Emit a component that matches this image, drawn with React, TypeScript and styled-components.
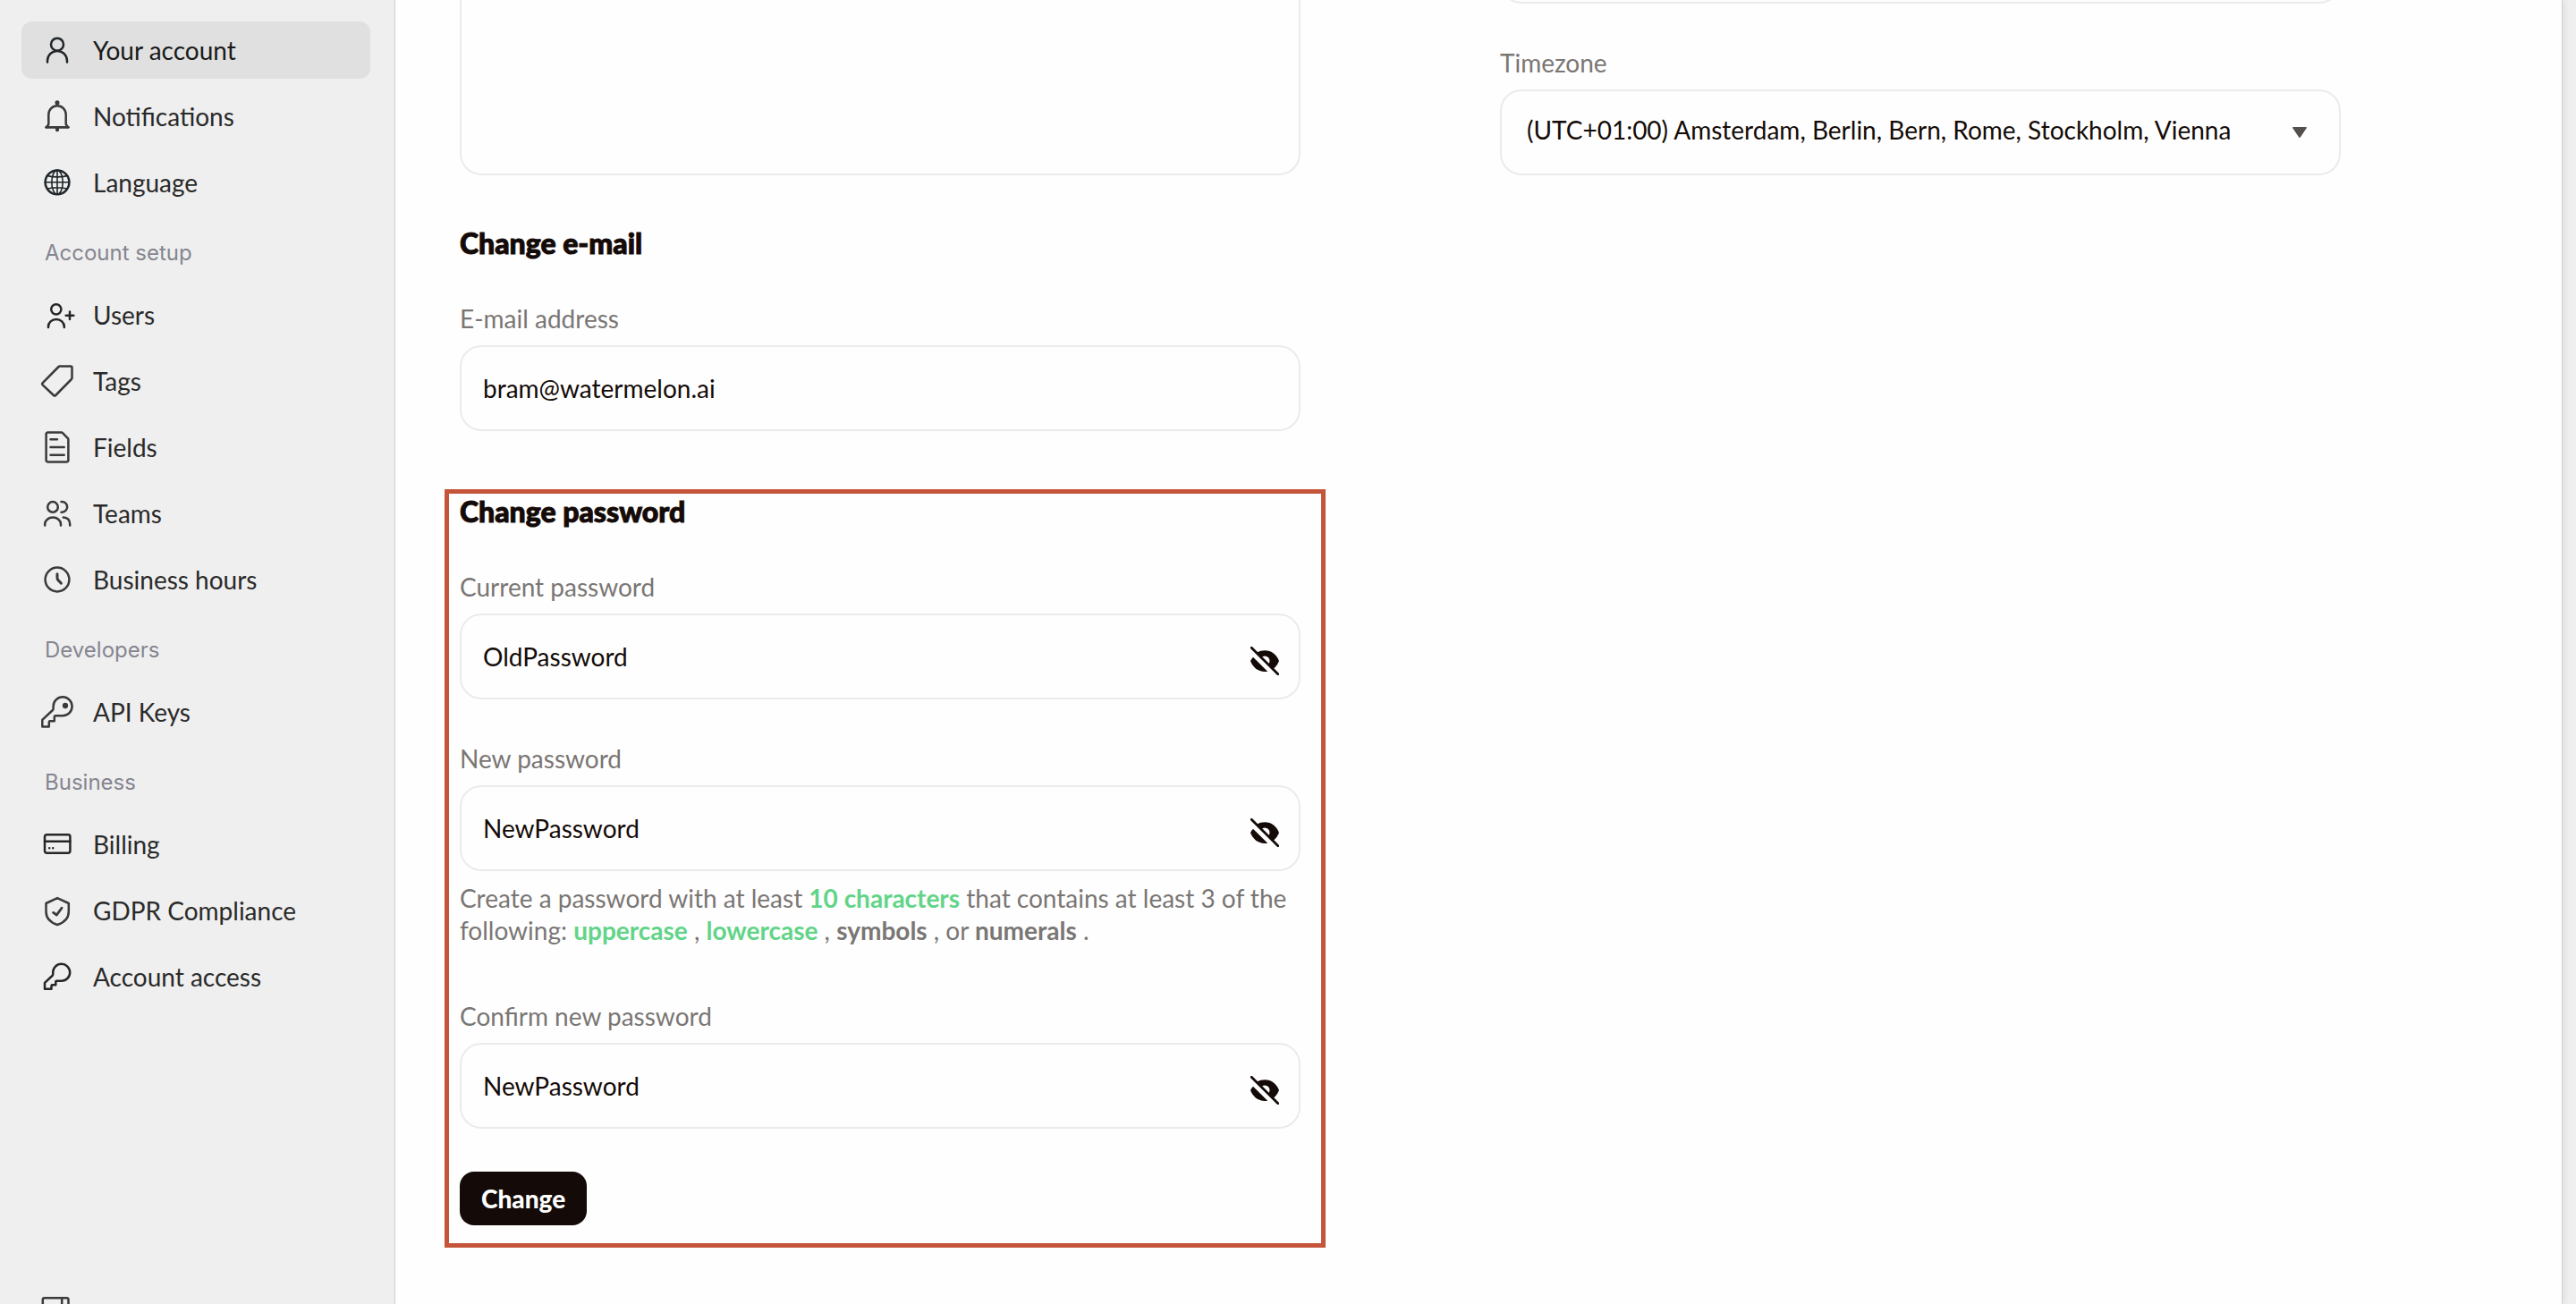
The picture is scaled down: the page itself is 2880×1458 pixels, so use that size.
import React, { useState } from "react";
import styled, { createGlobalStyle } from "styled-components";

const colors = {
  shell: "#efefef",
  surface: "#fefefe",
  active: "#e0e0e0",
  line: "#ebebeb",
  edge: "#d0d0d0",
  ink: "#140b08",
  nav: "#2a2a2a",
  icon: "#3a3a3a",
  muted: "#7a7674",
  section: "#85858f",
  success: "#62d488",
  frame: "#c4553b",
};

const GlobalStyle = createGlobalStyle`
  *, *::before, *::after { box-sizing: border-box; }
  body {
    margin: 0;
    background: ${colors.shell};
    color: ${colors.ink};
    font-family: Lato, "Liberation Sans", sans-serif;
    font-size: 28px;
    line-height: 36px;
  }
  button, input, select, textarea { font: inherit; color: inherit; }
`;

const Shell = styled.div`
  display: grid;
  grid-template-columns: 442px minmax(0, 1fr);
  height: 100vh;
  padding-right: 16px;
  overflow: hidden;
`;

const Sidebar = styled.aside`
  display: flex;
  flex-direction: column;
  min-height: 0;
  padding: 24px 27px 0 24px;
  border-right: 1px solid ${colors.edge};
`;

const NavList = styled.nav`
  display: flex;
  flex-direction: column;
  gap: 10px;
`;

const NavItem = styled.a<{ $active?: boolean }>`
  display: flex;
  align-items: center;
  gap: 24px;
  height: 64px;
  padding: 0 24px;
  border-radius: 12px;
  color: ${(p) => (p.$active ? "#1a1a1a" : colors.nav)};
  background: ${(p) => (p.$active ? colors.active : "transparent")};
  text-decoration: none;
`;

const NavSection = styled.h3`
  display: flex;
  align-items: center;
  height: 64px;
  margin: 0;
  padding: 10px 26px 0;
  color: ${colors.section};
  font-family: Inter, "Liberation Sans", sans-serif;
  font-size: 24px;
  font-weight: 400;
`;

const CollapseButton = styled.button`
  display: flex;
  align-items: center;
  flex: none;
  height: 64px;
  margin: auto 0 -40px;
  padding: 0 22px;
  border: 0;
  background: none;
`;

const NavIcon = styled.svg<{ $tone?: string }>`
  flex: none;
  width: 32px;
  height: 32px;
  overflow: visible;
  fill: none;
  stroke: ${(p) => p.$tone ?? colors.icon};
  stroke-width: 2.5;
  stroke-linecap: round;
  stroke-linejoin: round;
`;

const Panel = styled.main`
  min-height: 0;
  overflow: hidden;
  padding: 0 247px 0 72px;
  background: ${colors.surface};
  box-shadow: 1px 0 0 ${colors.edge}, 4px 0 6px rgba(0, 0, 0, 0.06);
`;

const Columns = styled.div`
  display: grid;
  grid-template-columns: repeat(2, minmax(0, 1fr));
  column-gap: 223px;
  margin-top: -92px;
`;

const Column = styled.div`
  display: flex;
  flex-direction: column;
`;

const Section = styled.section`
  display: flex;
  flex-direction: column;
  margin-top: 56px;
`;

const HighlightedSection = styled(Section)`
  margin: 65px -28px 0 -17px;
  padding: 0 23px 20px 12px;
  border: 5px solid ${colors.frame};
`;

const Heading = styled.h2`
  margin: 0 0 46px;
  font-size: 32px;
  font-weight: 900;
  line-height: 40px;
  -webkit-text-stroke: 1px currentColor;
`;

const FieldGroup = styled.div`
  display: flex;
  flex-direction: column;
  gap: 12px;

  & + & {
    margin-top: 48px;
  }
`;

const HintedGroup = styled(FieldGroup)`
  margin-bottom: 12px;
`;

const Label = styled.label`
  color: ${colors.muted};
`;

const Box = styled.div`
  position: relative;
  display: flex;
  align-items: center;
  height: 96px;
  border: 2px solid ${colors.line};
  border-radius: 24px;
`;

const Input = styled.input`
  flex: 1;
  min-width: 0;
  height: 100%;
  padding: 0 24px;
  border: 0;
  outline: 0;
  background: none;
`;

const Bio = styled.textarea`
  display: block;
  width: 100%;
  height: 288px;
  padding: 24px;
  border: 2px solid ${colors.line};
  border-radius: 24px;
  outline: 0;
  background: none;
  resize: none;
`;

const Select = styled.select`
  appearance: none;
  width: 100%;
  height: 100%;
  padding: 0 80px 6px 28px;
  border: 0;
  border-radius: 24px;
  outline: 0;
  background: none;
`;

const Caret = styled.svg`
  position: absolute;
  right: 36px;
  width: 16px;
  height: 12px;
  pointer-events: none;
`;

const ToggleButton = styled.button`
  display: flex;
  flex: none;
  margin-right: 22px;
  padding: 10px 0 0;
  border: 0;
  background: none;
`;

const Hint = styled.p`
  margin: 0;
  color: ${colors.muted};
`;

const Rule = styled.strong<{ $met?: boolean }>`
  color: ${(p) => (p.$met ? colors.success : "inherit")};
  font-weight: 700;
`;

const SubmitButton = styled.button`
  align-self: flex-start;
  height: 60px;
  margin-top: 48px;
  padding: 0 24px;
  border: 0;
  border-radius: 16px;
  background: ${colors.ink};
  color: #fff;
  font-weight: 900;
`;

const icons = {
  account: (
    <>
      <circle cx="16" cy="9.7" r="7" />
      <path d="M5 29.5V28a11 11 0 0 1 22 0v1.5" />
    </>
  ),
  bell: (
    <>
      <circle cx="16" cy="0.8" r="1.3" />
      <path d="M4 28.3 6.3 25V14.3a9.7 10 0 0 1 19.4 0V25l2.3 3.3" />
      <path d="M3.6 28.3H28.4" strokeWidth="2.8" />
      <path d="M14 29h4v2.2a2 2 0 0 1-4 0z" fill="#3a3a3a" stroke="none" />
    </>
  ),
  globe: (
    <>
      <circle cx="16" cy="15.8" r="13.4" />
      <g strokeWidth="1.6">
        <ellipse cx="16" cy="15.8" rx="6.2" ry="13.4" />
        <path d="M16 2.4v26.8M2.6 15.8h26.8M5.2 8.6q10.8 2.6 21.6 0M5.2 23q10.8-2.6 21.6 0" />
      </g>
    </>
  ),
  users: (
    <>
      <circle cx="14.8" cy="9.8" r="5.6" />
      <path d="M6 30v-1a8.9 8 0 0 1 17.8 0v1M30 12.4v8.6M25.7 16.7h8.6" />
    </>
  ),
  tag: (
    <path d="M18.9-.5H31a1.5 1.5 0 0 1 1.5 1.5v11.6q0 .8-.6 1.4L14.2 32q-1.1 1.1-2.2 0L-.3 20.3q-1.1-1.1 0-2.2L17.6 0q.5-.5 1.3-.5z" />
  ),
  document: (
    <>
      <path d="M5.4-.4h15.4q.7 0 1.2.5l5.9 6q.5.5.5 1.2v23.3q0 1.8-1.8 1.8H5.4q-1.8 0-1.8-1.8V1.4Q3.6-.4 5.4-.4z" />
      <path d="M8.5 7.3h7.4M8.5 16h15.2M8.5 24.7h15.2" />
    </>
  ),
  team: (
    <>
      <circle cx="11" cy="8.9" r="5.8" />
      <path d="M2.2 29.5V28a8.9 7.5 0 0 1 17.8 0v1.5M20.5 3h.8a5.8 5.8 0 0 1 0 11.7h-.8M22.8 20.6q7.4.6 7.4 7.6v1.3" />
    </>
  ),
  clock: (
    <>
      <circle cx="16" cy="16" r="13.4" />
      <path d="M16 9.8v4.4q0 1.4 1 2.4l3.4 3.6" strokeWidth="3" />
    </>
  ),
  key: (
    <>
      <path d="M11.6 9.8a10.5 10.5 0 1 1 10.6 10.5h-8q-1.4 0-1.4 1.4v4.6H8q-1.2 0-1.2 1.2v5H-.7v-7.6L10.9 14q.7-.7.7-1.7z" />
      <circle cx="25" cy="9" r="1.9" fill="#3a3a3a" />
    </>
  ),
  card: (
    <>
      <rect x="2" y="5.2" width="28.4" height="20.6" rx="2.2" />
      <path d="M2 12.7h28.4" />
      <path d="M7.2 20.3h.01M11.2 20.3h.01" />
    </>
  ),
  shield: (
    <>
      <path d="M16.1 2.1 28.8 8v9.2c0 7-4.9 12.2-12.7 14.8C8.4 29.4 3.5 24.2 3.5 17.2V8z" />
      <path d="M11.6 18.4 15.4 21 21 13.2" strokeWidth="2.8" />
    </>
  ),
  access: (
    <path d="M11.2 11.3a9.5 9.5 0 1 1 9.6 9.5h-5.6q-.9 0-.9.9v3.6h-3.8q-1 0-1 1v3.5H2v-7L10.4 15q.8-.8.8-1.8z" />
  ),
  collapse: (
    <>
      <rect x="1.8" y="1.3" width="28.7" height="26" rx="2" />
      <path d="M23.2 1.3v26" />
    </>
  ),
};

type IconName = keyof typeof icons;

const Icon = ({ name, tone }: { name: IconName; tone?: string }) => (
  <NavIcon viewBox="0 0 32 32" aria-hidden="true" $tone={tone}>
    {icons[name]}
  </NavIcon>
);

const EyeOff = () => (
  <svg width="32" height="32" viewBox="0 0 32 32" fill={colors.ink} aria-hidden="true">
    <path d="M7.5 6.5C10 5 13 4.3 16 4.3 23.5 4.3 29.5 9 32 16c-1.4 3.5-3.5 6.6-6.5 9l-5.6-5.1a5.5 5.5 0 0 0-7.8-7.8z" />
    <path d="M3 11.7 19.2 27.7Q17.6 28 16 28C8.5 28 2.5 23 0 16c.7-1.7 1.7-3.1 3-4.3z" />
    <path d="M1.2 1.2 30.8 30.8" stroke={colors.ink} strokeWidth="2.8" strokeLinecap="round" />
  </svg>
);

type NavEntry = { label: string; icon: IconName; tone?: string; active?: boolean };

const groups: { title?: string; items: NavEntry[] }[] = [
  {
    items: [
      { label: "Your account", icon: "account", tone: "#20262a", active: true },
      { label: "Notifications", icon: "bell" },
      { label: "Language", icon: "globe", tone: "#20262a" },
    ],
  },
  {
    title: "Account setup",
    items: [
      { label: "Users", icon: "users", tone: "#262626" },
      { label: "Tags", icon: "tag" },
      { label: "Fields", icon: "document" },
      { label: "Teams", icon: "team" },
      { label: "Business hours", icon: "clock" },
    ],
  },
  { title: "Developers", items: [{ label: "API Keys", icon: "key" }] },
  {
    title: "Business",
    items: [
      { label: "Billing", icon: "card", tone: "#262626" },
      { label: "GDPR Compliance", icon: "shield" },
      { label: "Account access", icon: "access", tone: "#262626" },
    ],
  },
];

type PasswordFieldProps = { id: string; label: string; initial: string; children?: React.ReactNode };

function PasswordField({ id, label, initial, children }: PasswordFieldProps) {
  const [value, setValue] = useState(initial);
  const [visible, setVisible] = useState(true);
  const Group = children ? HintedGroup : FieldGroup;
  return (
    <Group>
      <Label htmlFor={id}>{label}</Label>
      <Box>
        <Input
          id={id}
          type={visible ? "text" : "password"}
          value={value}
          onChange={(e) => setValue(e.target.value)}
        />
        <ToggleButton type="button" aria-label="Toggle password visibility" onClick={() => setVisible(!visible)}>
          <EyeOff />
        </ToggleButton>
      </Box>
      {children}
    </Group>
  );
}

export default function App() {
  return (
    <>
      <GlobalStyle />
      <Shell>
        <Sidebar>
          <NavList>
            {groups.map((group, i) => (
              <React.Fragment key={i}>
                {group.title && <NavSection>{group.title}</NavSection>}
                {group.items.map((item) => (
                  <NavItem key={item.label} href="#" $active={item.active}>
                    <Icon name={item.icon} tone={item.tone} />
                    {item.label}
                  </NavItem>
                ))}
              </React.Fragment>
            ))}
          </NavList>
          <CollapseButton type="button" aria-label="Collapse sidebar">
            <Icon name="collapse" />
          </CollapseButton>
        </Sidebar>

        <Panel>
          <Columns>
            <Column>
              <Bio aria-label="About you" />

              <Section>
                <Heading>Change e-mail</Heading>
                <FieldGroup>
                  <Label htmlFor="email">E-mail address</Label>
                  <Box>
                    <Input id="email" type="email" defaultValue="bram@watermelon.ai" />
                  </Box>
                </FieldGroup>
              </Section>

              <HighlightedSection>
                <Heading>Change password</Heading>
                <PasswordField id="current" label="Current password" initial="OldPassword" />
                <PasswordField id="new" label="New password" initial="NewPassword">
                  <Hint>
                    Create a password with at least <Rule $met>10 characters</Rule> that contains at least 3 of the
                    following: <Rule $met>uppercase</Rule> , <Rule $met>lowercase</Rule> , <Rule>symbols</Rule> , or{" "}
                    <Rule>numerals</Rule> .
                  </Hint>
                </PasswordField>
                <PasswordField id="confirm" label="Confirm new password" initial="NewPassword" />
                <SubmitButton type="button">Change</SubmitButton>
              </HighlightedSection>
            </Column>

            <Column>
              <FieldGroup>
                <Box>
                  <Input aria-label="Phone number" />
                </Box>
              </FieldGroup>
              <FieldGroup>
                <Label htmlFor="timezone">Timezone</Label>
                <Box>
                  <Select id="timezone">
                    <option>(UTC+01:00) Amsterdam, Berlin, Bern, Rome, Stockholm, Vienna</option>
                  </Select>
                  <Caret viewBox="0 0 16 12" fill="#55504e" aria-hidden="true">
                    <path d="M1 0h14q1.4 0 .7 1.2L9 11.2q-1 1.4-2 0L.3 1.2Q-.4 0 1 0z" />
                  </Caret>
                </Box>
              </FieldGroup>
            </Column>
          </Columns>
        </Panel>
      </Shell>
    </>
  );
}
